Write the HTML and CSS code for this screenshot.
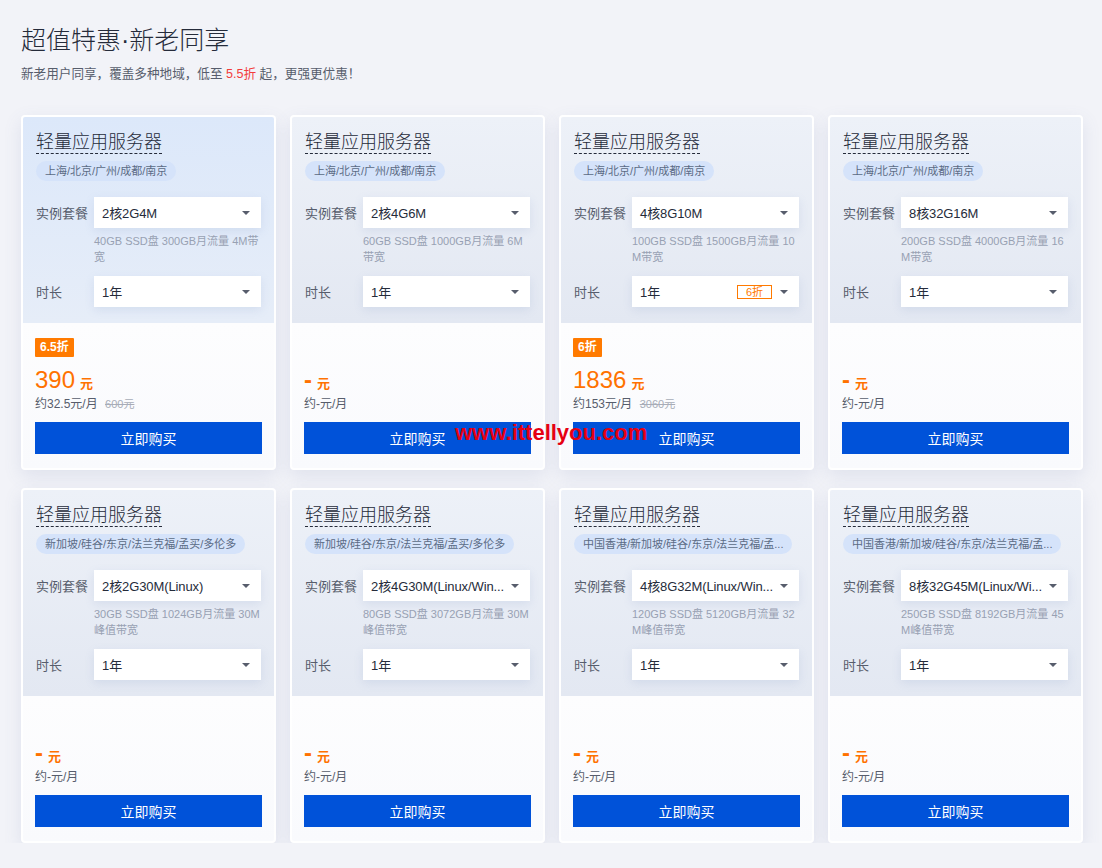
FILE: index.html
```html
<!DOCTYPE html>
<html lang="zh-CN">
<head>
  <meta charset="UTF-8" />
  <meta name="viewport" content="width=device-width, initial-scale=1.0"/>
  <title>超值特惠·新老同享</title>
  <link rel="stylesheet" href="styles.css">
</head>
<body>
  <div class="page">
    <h1 class="title">超值特惠·新老同享</h1>
    <p class="subtitle">新老用户同享，覆盖多种地域，低至 <span class="hot">5.5折</span> 起，更强更优惠！</p>

    <div class="cards">
      <!-- row 1 -->
      <div class="card active">
        <div class="card-top">
          <h3 class="card-title"><span>轻量应用服务器</span></h3>
          <div class="region"><span>上海/北京/广州/成都/南京</span></div>
          <div class="field">
            <label>实例套餐</label>
            <div class="select"><span class="value">2核2G4M</span><i class="arrow"></i></div>
          </div>
          <p class="spec">40GB SSD盘 300GB月流量 4M带宽</p>
          <div class="field duration">
            <label>时长</label>
            <div class="select"><span class="value">1年</span><i class="arrow"></i></div>
          </div>
        </div>
        <div class="card-bottom">
          <div class="badge-row"><span class="badge">6.5折</span></div>
          <div class="price"><strong>390</strong><em>元</em></div>
          <div class="monthly">约32.5元/月 <s>600元</s></div>
          <button class="buy">立即购买</button>
        </div>
      </div>

      <div class="card">
        <div class="card-top">
          <h3 class="card-title"><span>轻量应用服务器</span></h3>
          <div class="region"><span>上海/北京/广州/成都/南京</span></div>
          <div class="field">
            <label>实例套餐</label>
            <div class="select"><span class="value">2核4G6M</span><i class="arrow"></i></div>
          </div>
          <p class="spec">60GB SSD盘 1000GB月流量 6M带宽</p>
          <div class="field duration">
            <label>时长</label>
            <div class="select"><span class="value">1年</span><i class="arrow"></i></div>
          </div>
        </div>
        <div class="card-bottom">
          <div class="badge-row"></div>
          <div class="price"><strong class="dash">-</strong><em>元</em></div>
          <div class="monthly">约-元/月</div>
          <button class="buy">立即购买</button>
        </div>
      </div>

      <div class="card">
        <div class="card-top">
          <h3 class="card-title"><span>轻量应用服务器</span></h3>
          <div class="region"><span>上海/北京/广州/成都/南京</span></div>
          <div class="field">
            <label>实例套餐</label>
            <div class="select"><span class="value">4核8G10M</span><i class="arrow"></i></div>
          </div>
          <p class="spec">100GB SSD盘 1500GB月流量 10M带宽</p>
          <div class="field duration">
            <label>时长</label>
            <div class="select"><span class="value">1年</span><span class="off">6折</span><i class="arrow"></i></div>
          </div>
        </div>
        <div class="card-bottom">
          <div class="badge-row"><span class="badge">6折</span></div>
          <div class="price"><strong>1836</strong><em>元</em></div>
          <div class="monthly">约153元/月 <s>3060元</s></div>
          <button class="buy">立即购买</button>
        </div>
      </div>

      <div class="card">
        <div class="card-top">
          <h3 class="card-title"><span>轻量应用服务器</span></h3>
          <div class="region"><span>上海/北京/广州/成都/南京</span></div>
          <div class="field">
            <label>实例套餐</label>
            <div class="select"><span class="value">8核32G16M</span><i class="arrow"></i></div>
          </div>
          <p class="spec">200GB SSD盘 4000GB月流量 16M带宽</p>
          <div class="field duration">
            <label>时长</label>
            <div class="select"><span class="value">1年</span><i class="arrow"></i></div>
          </div>
        </div>
        <div class="card-bottom">
          <div class="badge-row"></div>
          <div class="price"><strong class="dash">-</strong><em>元</em></div>
          <div class="monthly">约-元/月</div>
          <button class="buy">立即购买</button>
        </div>
      </div>

      <!-- row 2 -->
      <div class="card">
        <div class="card-top">
          <h3 class="card-title"><span>轻量应用服务器</span></h3>
          <div class="region"><span>新加坡/硅谷/东京/法兰克福/孟买/多伦多</span></div>
          <div class="field">
            <label>实例套餐</label>
            <div class="select"><span class="value">2核2G30M(Linux)</span><i class="arrow"></i></div>
          </div>
          <p class="spec">30GB SSD盘 1024GB月流量 30M峰值带宽</p>
          <div class="field duration">
            <label>时长</label>
            <div class="select"><span class="value">1年</span><i class="arrow"></i></div>
          </div>
        </div>
        <div class="card-bottom">
          <div class="badge-row"></div>
          <div class="price"><strong class="dash">-</strong><em>元</em></div>
          <div class="monthly">约-元/月</div>
          <button class="buy">立即购买</button>
        </div>
      </div>

      <div class="card">
        <div class="card-top">
          <h3 class="card-title"><span>轻量应用服务器</span></h3>
          <div class="region"><span>新加坡/硅谷/东京/法兰克福/孟买/多伦多</span></div>
          <div class="field">
            <label>实例套餐</label>
            <div class="select"><span class="value">2核4G30M(Linux/Win...</span><i class="arrow"></i></div>
          </div>
          <p class="spec">80GB SSD盘 3072GB月流量 30M峰值带宽</p>
          <div class="field duration">
            <label>时长</label>
            <div class="select"><span class="value">1年</span><i class="arrow"></i></div>
          </div>
        </div>
        <div class="card-bottom">
          <div class="badge-row"></div>
          <div class="price"><strong class="dash">-</strong><em>元</em></div>
          <div class="monthly">约-元/月</div>
          <button class="buy">立即购买</button>
        </div>
      </div>

      <div class="card">
        <div class="card-top">
          <h3 class="card-title"><span>轻量应用服务器</span></h3>
          <div class="region"><span>中国香港/新加坡/硅谷/东京/法兰克福/孟...</span></div>
          <div class="field">
            <label>实例套餐</label>
            <div class="select"><span class="value">4核8G32M(Linux/Win...</span><i class="arrow"></i></div>
          </div>
          <p class="spec">120GB SSD盘 5120GB月流量 32M峰值带宽</p>
          <div class="field duration">
            <label>时长</label>
            <div class="select"><span class="value">1年</span><i class="arrow"></i></div>
          </div>
        </div>
        <div class="card-bottom">
          <div class="badge-row"></div>
          <div class="price"><strong class="dash">-</strong><em>元</em></div>
          <div class="monthly">约-元/月</div>
          <button class="buy">立即购买</button>
        </div>
      </div>

      <div class="card">
        <div class="card-top">
          <h3 class="card-title"><span>轻量应用服务器</span></h3>
          <div class="region"><span>中国香港/新加坡/硅谷/东京/法兰克福/孟...</span></div>
          <div class="field">
            <label>实例套餐</label>
            <div class="select"><span class="value">8核32G45M(Linux/Wi...</span><i class="arrow"></i></div>
          </div>
          <p class="spec">250GB SSD盘 8192GB月流量 45M峰值带宽</p>
          <div class="field duration">
            <label>时长</label>
            <div class="select"><span class="value">1年</span><i class="arrow"></i></div>
          </div>
        </div>
        <div class="card-bottom">
          <div class="badge-row"></div>
          <div class="price"><strong class="dash">-</strong><em>元</em></div>
          <div class="monthly">约-元/月</div>
          <button class="buy">立即购买</button>
        </div>
      </div>
    </div>

    <div class="watermark">www.ittellyou.com</div>
  </div>
</body>
</html>
```

FILE: styles.css
```css
body {
  margin: 0;
  background: #f2f3f8;
  font-family: 'Liberation Sans', 'Noto Sans CJK SC', sans-serif;
  color: #252b3a;
}

.page {
  position: relative;
  padding: 22px 19px 0 21px;
}

.title {
  margin: 0;
  font-size: 25px;
  line-height: 36px;
  font-weight: 300;
  color: #252b3a;
}

.subtitle {
  margin: 6px 0 0;
  font-size: 12.6px;
  line-height: 20px;
  color: #575d6c;
}

.hot {
  color: #f23c3c;
}

.cards {
  margin-top: 31px;
  display: grid;
  grid-template-columns: repeat(4, 1fr);
  column-gap: 14px;
  row-gap: 18px;
}

.card {
  border: 2px solid #fff;
  border-radius: 4px;
  overflow: hidden;
  background: #fff;
  box-shadow: 0 6px 18px rgba(90, 110, 160, 0.13);
}

.card-top {
  padding: 14px 13px 16px;
  background: linear-gradient(180deg, #edf1f8, #e3e8f2);
}

.card.active {
  border-color: transparent;
}

.card.active .card-top {
  background: linear-gradient(180deg, #dce8fa, #e6edf8);
}

.card-title {
  margin: 0;
  font-size: 18px;
  line-height: 22px;
  font-weight: 300;
  color: #252b3a;
}

.card-title span {
  display: inline-block;
  border-bottom: 1px dashed #252b3a;
}

.region {
  margin-top: 7px;
  display: flex;
}

.region span {
  max-width: 100%;
  box-sizing: border-box;
  height: 20px;
  line-height: 20px;
  padding: 0 9px;
  border-radius: 10px;
  background: #d5e3fa;
  color: #5b6b85;
  font-size: 11px;
  white-space: nowrap;
}

.field {
  margin-top: 16px;
  display: flex;
  align-items: center;
}

.field.duration {
  margin-top: 11px;
}

.field label {
  width: 58px;
  flex-shrink: 0;
  font-size: 13px;
  color: #575d6c;
}

.select {
  flex: 1;
  min-width: 0;
  height: 31px;
  display: flex;
  align-items: center;
  background: #fff;
  padding: 0 11px 0 8px;
  box-shadow: 0 3px 10px rgba(120, 140, 190, 0.16);
}

.select .value {
  flex: 1;
  min-width: 0;
  font-size: 13px;
  letter-spacing: -0.1px;
  color: #252b3a;
  white-space: nowrap;
}

.arrow {
  flex-shrink: 0;
  margin-left: 4px;
  width: 0;
  height: 0;
  border-left: 4px solid transparent;
  border-right: 4px solid transparent;
  border-top: 4px solid #575d6c;
}

.off {
  flex-shrink: 0;
  width: 33px;
  height: 12px;
  line-height: 12px;
  text-align: center;
  border: 1px solid #ff7a00;
  color: #ff7a00;
  font-size: 11px;
  margin-right: 4px;
}

.spec {
  margin: 5px 0 0 58px;
  font-size: 11px;
  line-height: 16px;
  color: #98a1b3;
  word-break: break-all;
}

.card-bottom {
  padding: 14px 12px 14px;
  background: linear-gradient(180deg, #fdfdfe, #f9fafd);
}

.badge-row {
  height: 19px;
}

.badge {
  display: inline-block;
  height: 19px;
  line-height: 19px;
  padding: 0 5px;
  background: #ff7a00;
  color: #fff;
  font-size: 12px;
  font-weight: bold;
  border-radius: 1px;
}

.price {
  margin-top: 10px;
  height: 28px;
  display: flex;
  align-items: baseline;
  color: #ff7200;
}

.price strong {
  font-size: 24px;
  line-height: 28px;
  font-weight: normal;
}

.price strong.dash {
  font-weight: bold;
}

.price em {
  font-style: normal;
  font-weight: bold;
  font-size: 13px;
  margin-left: 5px;
}

.monthly {
  margin-top: 1px;
  font-size: 12px;
  line-height: 18px;
  color: #575d6c;
}

.monthly s {
  margin-left: 4px;
  font-size: 11px;
  color: #a8adb8;
}

.buy {
  display: block;
  width: 100%;
  margin-top: 9px;
  height: 32px;
  border: none;
  background: #0052d9;
  color: #fff;
  font-family: inherit;
  font-size: 14px;
  cursor: pointer;
}

.watermark {
  position: absolute;
  left: 455px;
  top: 420px;
  font-size: 22px;
  line-height: 26px;
  font-weight: bold;
  color: #e60012;
}
```
